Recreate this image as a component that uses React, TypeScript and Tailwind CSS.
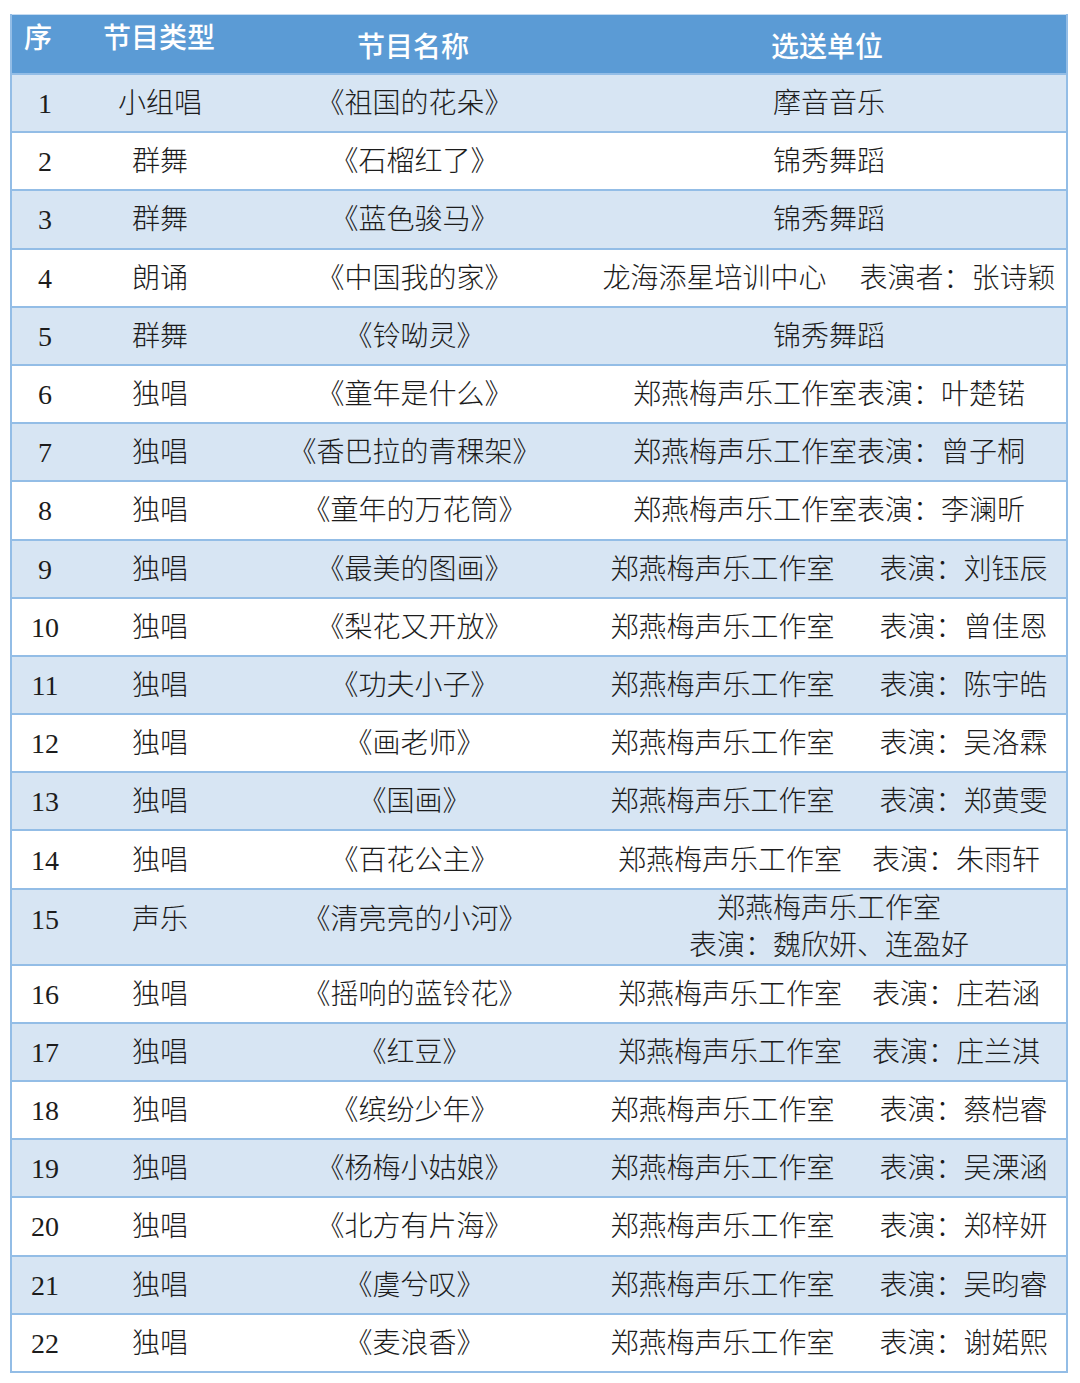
import React from "react"

type Row = {
    no: string
    kind: string
    title: string
    unit: React.ReactNode
    tall?: boolean
}

const Split = ({ a, b, gap }: { a: string; b: string; gap: string }) => (
    <span className="whitespace-nowrap">
        {a}
        <span className={gap}>{b}</span>
    </span>
)

const studio = "郑燕梅声乐工作室"

const rows: Row[] = [
    { no: "1", kind: "小组唱", title: "《祖国的花朵》", unit: "摩音音乐" },
    { no: "2", kind: "群舞", title: "《石榴红了》", unit: "锦秀舞蹈" },
    { no: "3", kind: "群舞", title: "《蓝色骏马》", unit: "锦秀舞蹈" },
    {
        no: "4",
        kind: "朗诵",
        title: "《中国我的家》",
        unit: <Split a="龙海添星培训中心" b="表演者：张诗颖" gap="ml-[33px]" />,
    },
    { no: "5", kind: "群舞", title: "《铃呦灵》", unit: "锦秀舞蹈" },
    { no: "6", kind: "独唱", title: "《童年是什么》", unit: "郑燕梅声乐工作室表演：叶楚锘" },
    { no: "7", kind: "独唱", title: "《香巴拉的青稞架》", unit: "郑燕梅声乐工作室表演：曾子桐" },
    { no: "8", kind: "独唱", title: "《童年的万花筒》", unit: "郑燕梅声乐工作室表演：李澜昕" },
    { no: "9", kind: "独唱", title: "《最美的图画》", unit: <Split a={studio} b="表演：刘钰辰" gap="ml-[45px]" /> },
    { no: "10", kind: "独唱", title: "《梨花又开放》", unit: <Split a={studio} b="表演：曾佳恩" gap="ml-[45px]" /> },
    { no: "11", kind: "独唱", title: "《功夫小子》", unit: <Split a={studio} b="表演：陈宇皓" gap="ml-[45px]" /> },
    { no: "12", kind: "独唱", title: "《画老师》", unit: <Split a={studio} b="表演：吴洛霖" gap="ml-[45px]" /> },
    { no: "13", kind: "独唱", title: "《国画》", unit: <Split a={studio} b="表演：郑黄雯" gap="ml-[45px]" /> },
    { no: "14", kind: "独唱", title: "《百花公主》", unit: <Split a={studio} b="表演：朱雨轩" gap="ml-[30px]" /> },
    {
        no: "15",
        kind: "声乐",
        title: "《清亮亮的小河》",
        tall: true,
        unit: (
            <span className="flex flex-col items-center leading-[37px]">
                <span>{studio}</span>
                <span>表演：魏欣妍、连盈好</span>
            </span>
        ),
    },
    { no: "16", kind: "独唱", title: "《摇响的蓝铃花》", unit: <Split a={studio} b="表演：庄若涵" gap="ml-[30px]" /> },
    { no: "17", kind: "独唱", title: "《红豆》", unit: <Split a={studio} b="表演：庄兰淇" gap="ml-[30px]" /> },
    { no: "18", kind: "独唱", title: "《缤纷少年》", unit: <Split a={studio} b="表演：蔡桤睿" gap="ml-[45px]" /> },
    { no: "19", kind: "独唱", title: "《杨梅小姑娘》", unit: <Split a={studio} b="表演：吴溧涵" gap="ml-[45px]" /> },
    { no: "20", kind: "独唱", title: "《北方有片海》", unit: <Split a={studio} b="表演：郑梓妍" gap="ml-[45px]" /> },
    { no: "21", kind: "独唱", title: "《虞兮叹》", unit: <Split a={studio} b="表演：吴昀睿" gap="ml-[45px]" /> },
    { no: "22", kind: "独唱", title: "《麦浪香》", unit: <Split a={studio} b="表演：谢婼熙" gap="ml-[45px]" /> },
]

// fixed column widths taken from the screenshot
const cols = "grid grid-cols-[70px_160px_350px_1fr]"

const App = () => {
    return (
        <div className="min-h-[1383px] bg-white pt-[14px] pl-[10px]">
            <div className="w-[1058px] border-x-2 border-b-2 border-[#93bde6] font-['Liberation_Serif','Noto_Sans_CJK_SC',serif] text-[28px] font-light text-[#1c1c1c]">
                {/* header */}
                <div
                    className={`${cols} h-[59px] border-t border-[#c5dbf1] bg-[#5b9bd5] font-['Noto_Sans_CJK_SC',sans-serif] font-medium text-white`}
                >
                    <div className="pl-[12px] pt-[1px] leading-[40px]">序</div>
                    <div className="pr-[6px] pt-[1px] text-center leading-[40px]">节目类型</div>
                    <div className="flex items-center justify-center pr-[8px] pt-[2px]">节目名称</div>
                    <div className="flex items-center justify-center pr-[4px] pt-[2px]">选送单位</div>
                </div>
                {rows.map((r, i) => (
                    <div
                        key={r.no}
                        className={`${cols} border-t-2 border-[#93bde6] ${
                            r.tall ? "h-[76px]" : "h-[58.2px]"
                        } ${i % 2 === 0 ? "bg-[#d7e5f3]" : "bg-white"}`}
                    >
                        <div className={`flex items-center justify-center pr-[4px] ${r.tall ? "pb-[16px]" : "pt-[2px]"}`}>
                            {r.no}
                        </div>
                        <div className={`flex items-center justify-center pr-[4px] ${r.tall ? "pb-[16px]" : "pt-[2px]"}`}>
                            {r.kind}
                        </div>
                        <div className={`flex items-center justify-center pr-[5px] ${r.tall ? "pb-[16px]" : "pt-[2px]"}`}>
                            {r.title}
                        </div>
                        <div className={`flex items-center justify-center ${r.tall ? "pb-[2px]" : "pt-[2px]"}`}>
                            {r.unit}
                        </div>
                    </div>
                ))}
            </div>
        </div>
    )
}

export default App
